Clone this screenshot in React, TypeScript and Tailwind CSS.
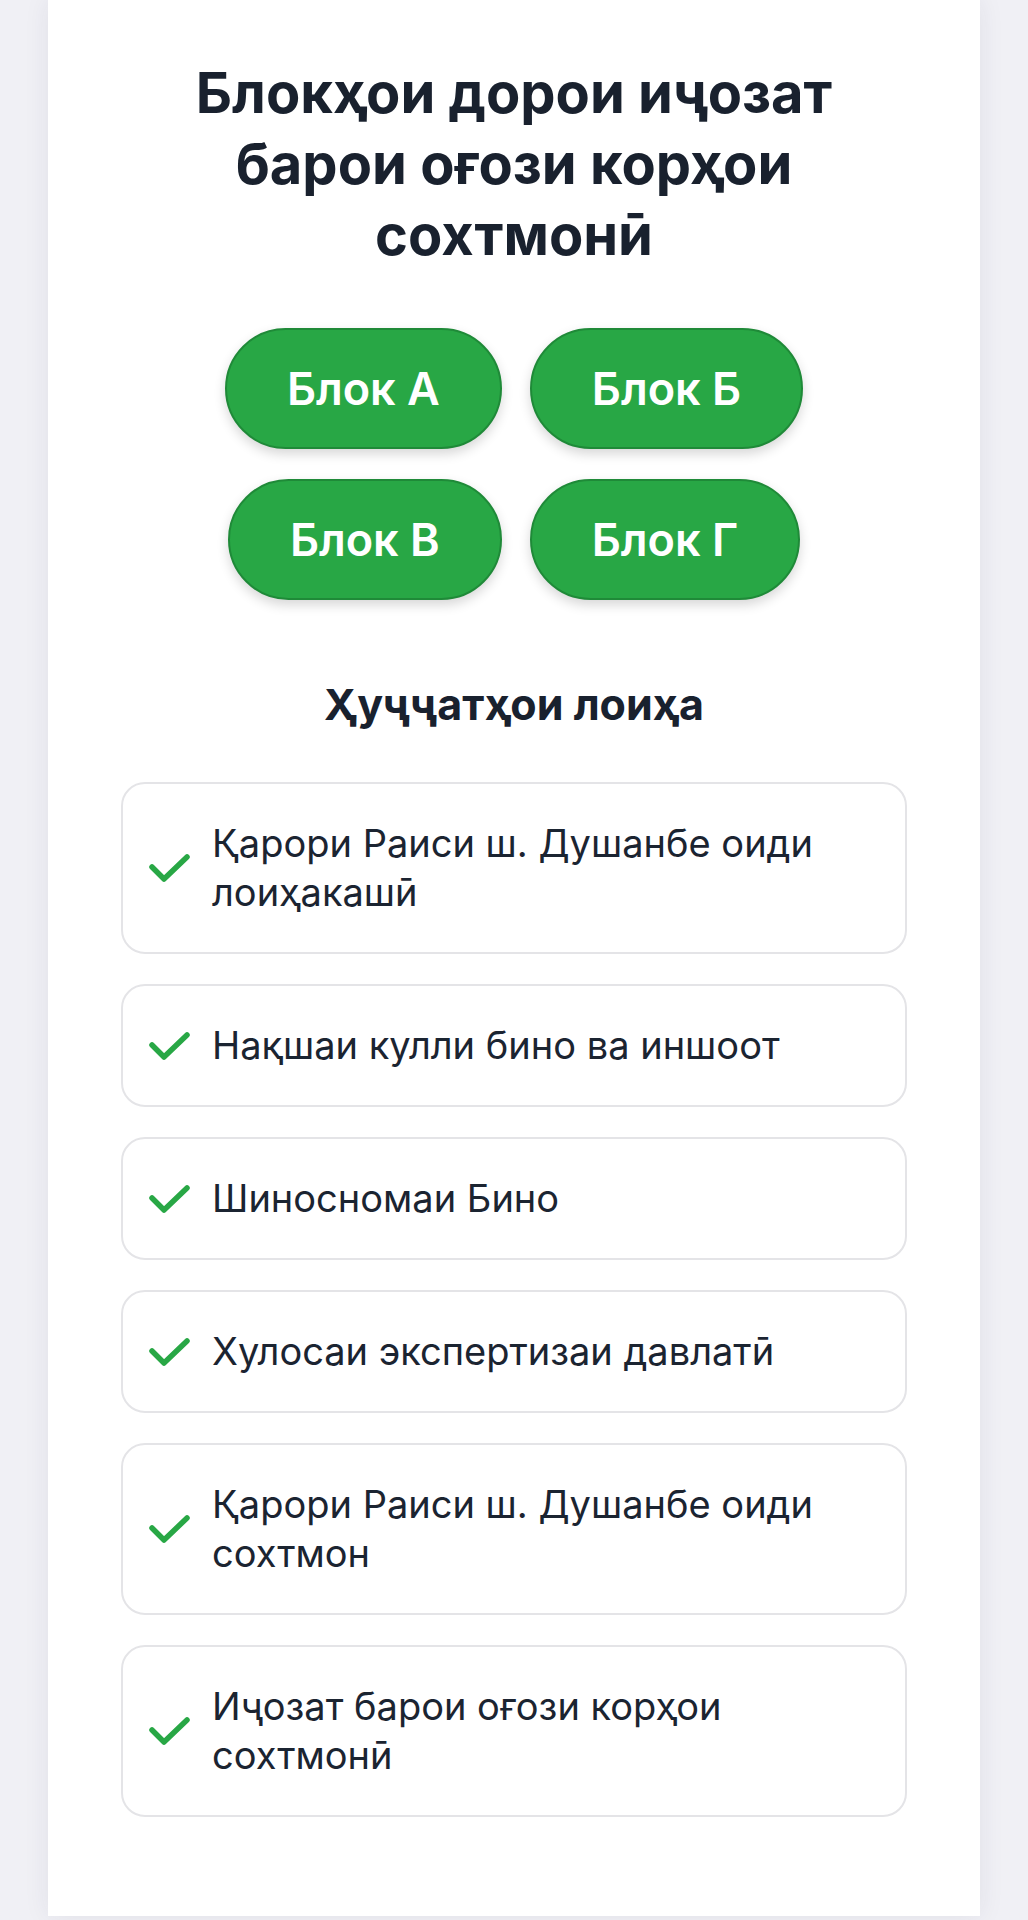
const blocks = [
  ["Блок А", "Блок Б"],
  ["Блок В", "Блок Г"],
];

const documents = [
  "Қарори Раиси ш. Душанбе оиди лоиҳакашӣ",
  "Нақшаи кулли бино ва иншоот",
  "Шиносномаи Бино",
  "Хулосаи экспертизаи давлатӣ",
  "Қарори Раиси ш. Душанбе оиди сохтмон",
  "Иҷозат барои оғози корҳои сохтмонӣ",
];

function CheckMark() {
  return (
    <svg viewBox="0 0 41 28" className="w-[41px] h-[28px] shrink-0" fill="none">
      <path
        d="M3 13 L15 25 L38 3"
        stroke="#28a745"
        strokeWidth="5.5"
        strokeLinecap="round"
        strokeLinejoin="round"
      />
    </svg>
  );
}

export default function App() {
  return (
    <div className="min-h-[1920px] bg-[#f0f0f5] px-[48px] font-['Inter','Noto_Sans',sans-serif]">
      <div className="bg-white min-h-[1915px] shadow-[0_0_24px_rgba(40,40,80,0.08)] px-[73px] pt-[58px] pb-[99px]">
        {/* Title */}
        <h1 className="mx-auto max-w-[700px] text-center text-[56px] leading-[71px] font-bold text-[#19212e]">
          Блокҳои дорои иҷозат барои оғози корҳои сохтмонӣ
        </h1>

        {/* Block buttons */}
        <div className="mt-[57px] flex flex-col items-center gap-[30px]">
          {blocks.map((row, i) => (
            <div key={i} className="flex justify-center gap-[28px]">
              {row.map((b) => (
                <button
                  key={b}
                  className="h-[121px] px-[60px] rounded-full bg-[#28a745] border-2 border-[#1f8a38] text-white text-[45px] leading-none font-semibold shadow-[0_5px_12px_rgba(0,0,0,0.16)]"
                >
                  {b}
                </button>
              ))}
            </div>
          ))}
        </div>

        {/* Documents */}
        <h2 className="mt-[76px] text-center text-[43px] leading-[56px] font-bold text-[#19212e]">
          Ҳуҷҷатҳои лоиҳа
        </h2>

        <div className="mt-[50px] flex flex-col gap-[30px]">
          {documents.map((doc, i) => (
            <div
              key={i}
              className="flex items-center gap-[22px] border-2 border-[#e4e4e7] rounded-[24px] pl-[26px] pr-[60px] py-[35px]"
            >
              <CheckMark />
              <span className="text-[38px] leading-[49px] text-[#1b2431]">{doc}</span>
            </div>
          ))}
        </div>
      </div>
    </div>
  );
}
